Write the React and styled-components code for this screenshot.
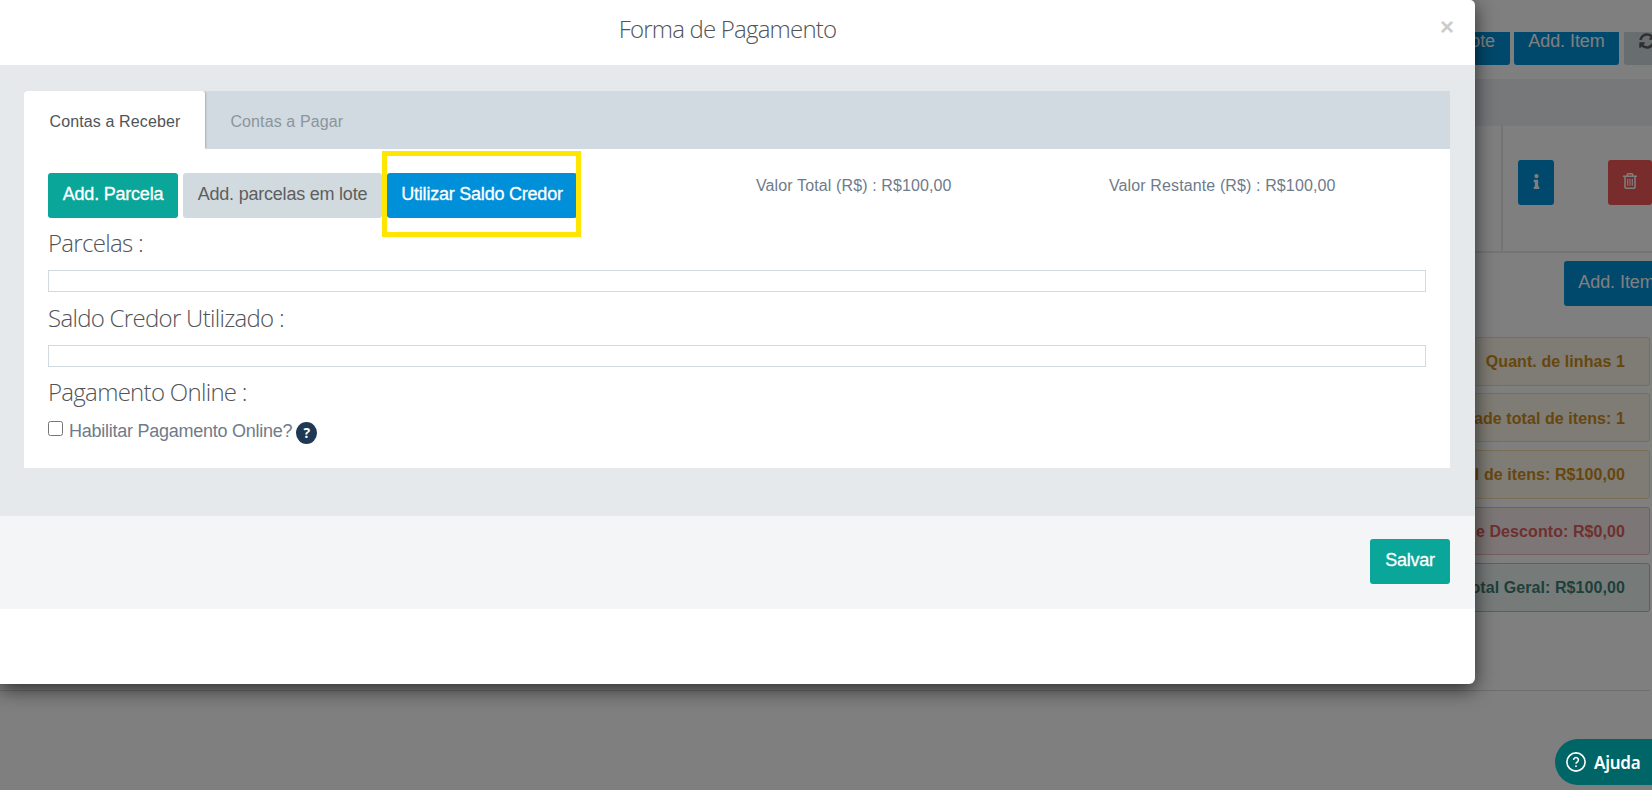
import React from 'react'
import styled, { createGlobalStyle } from 'styled-components'
import { FaInfo, FaSyncAlt } from 'react-icons/fa'

const totals = [
  { text: 'Quant. de linhas 1', kind: 'warning', gap: 7 },
  { text: 'Quantidade total de itens: 1', kind: 'warning', gap: 8, drop: 2 },
  { text: 'Total de itens: R$100,00', kind: 'warning', gap: 8 },
  { text: 'Total de Desconto: R$0,00', kind: 'danger', gap: 8, h: 48, drop: 2 },
  { text: 'Total Geral: R$100,00', kind: 'success', gap: 78 },
]

function App() {
  return (
    <Screen>
      <Global />
      <Page>
        <TopSpace />
        <Actions>
          <Button kind="info" w={130}>Add. em lote</Button>
          <Button kind="info" w={105}>Add. Item</Button>
          <Button w={46}><FaSyncAlt size={16} /></Button>
        </Actions>
        <TableHead />
        <TableRow>
          <Cell />
          <IconCell>
            <Button kind="info" w={36}><FaInfo size={15} /></Button>
            <Button kind="danger" w={44}><Trash /></Button>
          </IconCell>
        </TableRow>
        <AddRow>
          <Button kind="info" w={105}>Add. Item</Button>
        </AddRow>
        <Totals>
          {totals.map(t => (
            <Alert key={t.text} kind={t.kind} gap={t.gap} h={t.h} drop={t.drop}>{t.text}</Alert>
          ))}
        </Totals>
        <Rule />
      </Page>
      <Backdrop />
      <Modal>
        <Header>
          <Title>Forma de Pagamento</Title>
          <Close>×</Close>
        </Header>
        <Body>
          <Tabs>
            <Tab active>Contas a Receber</Tab>
            <Tab>Contas a Pagar</Tab>
          </Tabs>
          <Panel>
            <Toolbar>
              <Button kind="success" w={130} tight>Add. Parcela</Button>
              <Button w={199} tight>Add. parcelas em lote</Button>
              <Marked>
                <Button kind="info" w={190} tight>Utilizar Saldo Credor</Button>
              </Marked>
              <Amount w={348}>Valor Total (R$) : R$100,00</Amount>
              <Amount>Valor Restante (R$) : R$100,00</Amount>
            </Toolbar>
            <Subtitle>Parcelas :</Subtitle>
            <Box />
            <Subtitle h={53} top={8}>Saldo Credor Utilizado :</Subtitle>
            <Box />
            <Subtitle>Pagamento Online :</Subtitle>
            <Option>
              <Check type="checkbox" />
              <Label>Habilitar Pagamento Online?</Label>
              <Help>?</Help>
            </Option>
          </Panel>
        </Body>
        <Footer>
          <Button kind="success" w={80} tight>Salvar</Button>
        </Footer>
      </Modal>
      <HelpButton>
        <svg width="20" height="20" viewBox="0 0 20 20" fill="none" stroke="#fff">
          <circle cx="10" cy="10" r="9.1" strokeWidth="1.6" />
          <path d="M7.6 8a2.4 2.4 0 1 1 3.7 2c-.9.6-1.3 1-1.3 1.8" strokeWidth="1.6" />
          <circle cx="10" cy="14.2" r=".6" fill="#fff" strokeWidth=".8" />
        </svg>
        <span>Ajuda</span>
      </HelpButton>
    </Screen>
  )
}

function Trash() {
  return (
    <svg width="14" height="16" viewBox="0 0 14 16" fill="none" stroke="#fff" strokeWidth="1.5">
      <path d="M0 3.3h14M4.3 3V1.6l.8-.9h3.8l.8.9V3M2 3.5v10.6c0 .7.5 1.2 1.1 1.2h7.8c.6 0 1.1-.5 1.1-1.2V3.5" />
      <path d="M4.7 5.8v7M7 5.8v7M9.3 5.8v7" strokeWidth="1.1" />
    </svg>
  )
}

const Global = createGlobalStyle`
*,*:after{box-sizing:border-box;}
body{
  margin:0;
  overflow:hidden;
  font-family:"Liberation Sans",Arial,sans-serif;
}
`
const buttons = {
  success: ['#0aa699', '#fff'],
  info: ['#0090d9', '#fff'],
  danger: ['#f35958', '#fff'],
  plain: ['#d1dade', '#5e5e5e'],
}
const alerts = {
  warning: ['#fcf9e8', '#f6dca8', '#cf8d1d'],
  danger: ['#f9eded', '#eebcbc', '#dc605e'],
  success: ['#edf7f4', '#a7cac3', '#3c8074'],
}
const Screen = styled.div`
position:relative;
width:1652px;
height:790px;
overflow:hidden;
`
const Page = styled.div`
height:790px;
background:#fff;
`
const TopSpace = styled.div`
height:32px;
`
const Actions = styled.div`
display:flex;
align-items:flex-end;
height:33px;
margin-left:1380px;
gap:4px;
overflow:hidden;
& > :last-child{
  margin-left:1px;
}
`
const Button = styled.div.withConfig({ shouldForwardProp: p => !['kind', 'w', 'tight'].includes(p) })`
flex:none;
display:flex;
align-items:center;
justify-content:center;
width:${p => p.w}px;
height:45px;
padding-bottom:3px;
border-radius:3px;
white-space:nowrap;
font-size:18px;
letter-spacing:${p => (p.tight ? '-0.22px' : '-0.08px')};
background:${p => buttons[p.kind || 'plain'][0]};
color:${p => buttons[p.kind || 'plain'][1]};
-webkit-text-stroke:${p => (p.tight && p.kind ? '0.3px' : '0')};
`
const TableHead = styled.div`
height:47px;
margin-top:14px;
background:#ecf0f2;
`
const TableRow = styled.div`
display:flex;
height:127px;
border-bottom:2px solid #e5e9ec;
`
const Cell = styled.div`
width:1503px;
border-right:2px solid #e5e9ec;
`
const IconCell = styled.div`
display:flex;
gap:54px;
padding:34px 0 0 15px;
`
const AddRow = styled.div`
height:84px;
padding:8px 0 0 1564px;
`
const Totals = styled.div`
width:1650px;
`
const Alert = styled.div.withConfig({ shouldForwardProp: p => !['kind', 'gap', 'h', 'drop'].includes(p) })`
display:flex;
align-items:center;
justify-content:flex-end;
height:${p => p.h || 49}px;
margin-bottom:${p => p.gap}px;
padding:${p => p.drop || 0}px 24px 0 0;
border-radius:3px;
font-size:16px;
font-weight:700;
letter-spacing:0.08px;
background:${p => alerts[p.kind][0]};
border:1px solid ${p => alerts[p.kind][1]};
color:${p => alerts[p.kind][2]};
`
const Rule = styled.div`
width:1650px;
height:1px;
background:#dcdcdc;
`
const Backdrop = styled.div`
position:absolute;
inset:0;
background:rgba(0,0,0,.5);
`
const Modal = styled.div`
position:absolute;
top:0;
left:0;
width:1475px;
height:684px;
background:#fff;
border-radius:0 5px 6px 0;
box-shadow:0 5px 20px rgba(0,0,0,.65);
`
const Header = styled.div`
position:relative;
height:65px;
text-align:center;
`
const Title = styled.div`
padding:11px 20px 0 0;
font-family:"Open Sans",sans-serif;
font-size:24px;
font-weight:300;
line-height:36px;
letter-spacing:-0.8px;
color:#505458;
`
const Close = styled.div`
position:absolute;
top:13px;
right:21px;
font-size:24px;
font-weight:700;
line-height:28px;
color:#ccc;
`
const Body = styled.div`
height:451px;
padding:26px 25px 0 24px;
background:#e5e9ec;
`
const Tabs = styled.div`
display:flex;
height:58px;
background:#d1dae0;
`
const Tab = styled.div.withConfig({ shouldForwardProp: p => p !== 'active' })`
padding:0 25px 0 ${p => (p.active ? 25.5 : 25)}px;
border-radius:3px 3px 0 0;
font-size:16px;
line-height:61px;
letter-spacing:0.12px;
color:${p => (p.active ? '#505458' : '#8b959e')};
background:${p => (p.active ? '#fff' : 'transparent')};
box-shadow:${p => (p.active ? '2px 0 2px -1px rgba(0,0,0,.2)' : 'none')};
`
const Panel = styled.div`
position:relative;
height:319px;
padding:24px 24px 0;
background:#fff;
`
const Toolbar = styled.div`
display:flex;
height:45px;
gap:5px;
`
const Marked = styled.div`
position:relative;
flex:none;
width:364px;
&:after{
  content:"";
  position:absolute;
  top:-22px;
  left:-5px;
  width:199px;
  height:86px;
  border:5px solid #ffe600;
}
`
const Amount = styled.div`
width:${p => (p.w ? p.w + 'px' : 'auto')};
padding-top:3px;
font-size:16px;
line-height:20px;
letter-spacing:0.12px;
white-space:nowrap;
color:#6f7b8a;
`
const Subtitle = styled.div`
height:${p => p.h || 52}px;
padding-top:${p => p.top || 7}px;
font-family:"Open Sans",sans-serif;
font-size:24px;
font-weight:300;
line-height:36px;
letter-spacing:-0.7px;
color:#505458;
`
const Box = styled.div`
height:22px;
border:1px solid #d1dade;
`
const Option = styled.div`
display:flex;
align-items:flex-start;
`
const Check = styled.input`
width:15px;
height:15px;
margin:2px 6px 0 0;
`
const Label = styled.span`
font-size:18px;
line-height:24px;
letter-spacing:-0.25px;
color:#6f7b8a;
`
const Help = styled.span`
width:21px;
height:22px;
margin:3px 0 0 4px;
border-radius:50%;
text-align:center;
font-family:"Open Sans",sans-serif;
font-size:14px;
font-weight:700;
line-height:21px;
color:#fff;
background:#1f3853;
`
const Footer = styled.div`
display:flex;
justify-content:flex-end;
height:93px;
padding:23px 25px 0 0;
background:#f3f5f7;
`
const HelpButton = styled.div`
position:absolute;
top:739px;
left:1555px;
display:flex;
align-items:center;
gap:8px;
width:120px;
height:46px;
padding-left:11px;
border-radius:23px;
font-family:"Noto Sans",sans-serif;
font-size:17px;
font-weight:600;
letter-spacing:-0.25px;
color:#fff;
background:#006566;
`
export default App
